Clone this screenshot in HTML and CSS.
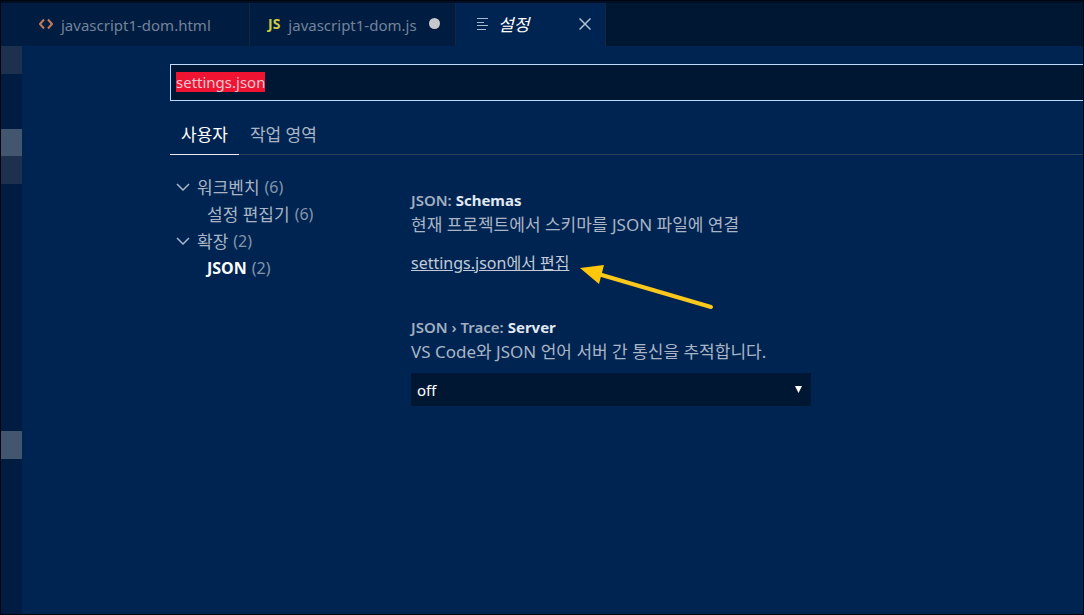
FILE: index.html
```html
<!DOCTYPE html>
<html lang="ko">
<head>
    <meta charset="UTF-8">
    <meta name="viewport" content="width=device-width, initial-scale=1.0">
    <title>설정</title>
    <link rel="stylesheet" href="styles.css">
</head>
<body>
    <div class="window">
        <div class="tab-bar">
            <div class="tab tab-html">
                <svg class="icon-code" viewBox="0 0 14 12" aria-hidden="true"><path d="M5 1.500 1 6l4 4.500M9 1.500 13 6l-4 4.500"/></svg>
                <span>javascript1-dom.html</span>
            </div>
            <div class="tab tab-js">
                <span class="icon-js">JS</span>
                <span>javascript1-dom.js</span>
                <span class="dirty"></span>
            </div>
            <div class="tab tab-settings active">
                <svg class="icon-list" viewBox="0 0 12 14" aria-hidden="true"><path d="M1 1.500h11M1 5.500h7M1 8.500h11M1 12.500h9"/></svg>
                <span class="tab-title">설정</span>
                <button class="close" aria-label="닫기">
                    <svg viewBox="0 0 12 12" aria-hidden="true"><path d="M.5.5l11 11M11.500.5l-11 11"/></svg>
                </button>
            </div>
        </div>

        <div class="main">
            <div class="sidebar">
                <div class="row dim"></div>
                <div class="row bright second"></div>
                <div class="row dim"></div>
                <div class="row bright last"></div>
            </div>

            <div class="settings">
                <input type="text" id="searchInput" class="search" value="settings.json" aria-label="설정 검색" spellcheck="false">

                <div class="scopes">
                    <button class="scope selected">사용자</button>
                    <button class="scope">작업 영역</button>
                </div>

                <div class="content">
                    <ul class="toc">
                        <li><svg class="chevron" viewBox="0 0 14 8" aria-hidden="true"><path d="M1 1l6 6 6-6"/></svg>워크벤치 <span class="count">(6)</span></li>
                        <li class="child">설정 편집기 <span class="count">(6)</span></li>
                        <li><svg class="chevron" viewBox="0 0 14 8" aria-hidden="true"><path d="M1 1l6 6 6-6"/></svg>확장 <span class="count">(2)</span></li>
                        <li class="child"><b>JSON</b> <span class="count">(2)</span></li>
                    </ul>

                    <div class="items">
                        <div class="item">
                            <h3>JSON: <b>Schemas</b></h3>
                            <p>현재 프로젝트에서 스키마를 JSON 파일에 연결</p>
                            <div class="edit">
                                <a href="#">settings.json에서 편집</a>
                                <svg class="arrow" viewBox="0 0 136 46" aria-hidden="true">
                                    <path class="shaft" d="M20 9.500 131 42"/>
                                    <path class="head" d="M0 3l24-3-5 19z"/>
                                </svg>
                            </div>
                        </div>
                        <div class="item">
                            <h3><label for="traceServer">JSON › Trace: <b>Server</b></label></h3>
                            <p>VS Code와 JSON 언어 서버 간 통신을 추적합니다.</p>
                            <div class="select-box">
                                <select id="traceServer">
                                    <option>off</option>
                                    <option>messages</option>
                                    <option>verbose</option>
                                </select>
                                <svg class="caret" viewBox="0 0 7 7" aria-hidden="true"><path d="M0 0h7L3.500 7z"/></svg>
                            </div>
                        </div>
                    </div>
                </div>
            </div>
        </div>
    </div>

    <script>
        // Start with the query selected so typing replaces it
        const searchInput = document.getElementById("searchInput");
        searchInput.focus();
        searchInput.select();
    </script>
</body>
</html>
```

FILE: styles.css
```css
* {
    box-sizing: border-box;
}
body {
    margin: 0;
    background-color: #002451;
    color: #a9b5c6;
    font-family: "Noto Sans", "Noto Sans CJK KR", sans-serif;
    font-size: 15px;
    line-height: 24px;
}
button {
    padding: 0;
    border: none;
    background: none;
    color: inherit;
    font: inherit;
    cursor: pointer;
}
svg {
    display: block;
    flex: none;
    fill: none;
}
.window {
    display: flex;
    flex-direction: column;
    min-height: 100vh;
    border: 1px solid #00050f;
}

/* Tabs */
.tab-bar {
    display: flex;
    height: 45px;
    border-top: 2px solid #000f24;
    background-color: #001733;
}
.tab {
    display: flex;
    align-items: center;
    border-right: 1px solid #15263c;
    background-color: #001c40;
    color: #73839b;
}
.tab-html {
    width: 249px;
    padding-left: 38px;
    gap: 8px;
}
.tab-js {
    width: 206px;
    padding-left: 18px;
    gap: 8px;
}
.tab-settings {
    width: 150px;
    padding: 0 14px 0 20px;
    gap: 10px;
}
.tab.active {
    background-color: #002451;
    color: #ffffff;
}
.tab-title {
    font-size: 17px;
    font-style: italic;
}
.icon-code {
    width: 14px;
    height: 12px;
    margin-bottom: 2px;
    stroke: #c27a5a;
    stroke-width: 2;
}
.icon-js {
    margin-bottom: 2px;
    color: #cbcb41;
    font-size: 14px;
    font-weight: bold;
}
.dirty {
    width: 11px;
    height: 11px;
    margin: 0 0 3px 4px;
    border-radius: 50%;
    background-color: #c6c8cc;
}
.icon-list {
    width: 12px;
    height: 14px;
    margin-bottom: 2px;
    stroke: #a9b8cc;
}
.close {
    margin-left: auto;
    padding-bottom: 2px;
}
.close svg {
    width: 12px;
    height: 12px;
    stroke: #b4c0d0;
    stroke-width: 1.5;
}

.main {
    display: flex;
    flex: 1;
}

/* Cropped file tree */
.sidebar {
    width: 21px;
    background-color: #001c40;
}
.row {
    height: 28px;
}
.dim {
    background-color: #1d304d;
}
.bright {
    background-color: #43566f;
}
.second {
    height: 27px;
    margin-top: 55px;
}
.last {
    margin-top: 247px;
}

/* Settings editor */
.settings {
    flex: 1;
    padding: 18px 0 0 148px;
}
.search {
    display: block;
    width: 100%;
    height: 37px;
    padding: 0 5px 2px;
    border: 1px solid #bbdaff;
    border-right: none;
    border-radius: 0;
    outline: none;
    background-color: #001733;
    color: #e0e4ea;
    font: inherit;
    caret-color: transparent;
}
.search::selection {
    background-color: #f01432;
    color: #e6c8d2;
}
.scopes {
    display: flex;
    height: 54px;
    padding-top: 15px;
    border-bottom: 1px solid #2d4158;
}
.scope {
    height: 39px;
    padding: 0 11px;
    border-bottom: 1px solid transparent;
    font-size: 17px;
}
.selected {
    border-bottom-color: #e7edf5;
    color: #ffffff;
}
.content {
    display: flex;
    padding-top: 19px;
}
.toc {
    width: 241px;
    margin: 0;
    padding: 0 0 0 6px;
    list-style: none;
    font-size: 17px;
    line-height: 27px;
}
.toc li {
    display: flex;
    align-items: center;
    gap: 5px;
}
.toc .child {
    padding-left: 31px;
}
.toc b {
    color: #ffffff;
    font-size: 16px;
}
.chevron {
    width: 14px;
    height: 8px;
    margin: 0 2px 2px 0;
    stroke: #aab6c8;
    stroke-width: 1.5;
}
.count {
    color: #8494aa;
    font-size: 16px;
}
.item {
    padding-top: 14px;
    margin-bottom: 26px;
}
.item h3 {
    margin: 0;
    color: #a0aec0;
    font-size: 15px;
    font-weight: 600;
}
.item h3 b {
    color: #e0e8f2;
    font-weight: bold;
}
.item p {
    margin: 0 0 9px;
    font-size: 17px;
    line-height: 25px;
}
.edit {
    position: relative;
    margin-top: 14px;
}
.edit a {
    color: #c0cbda;
    font-size: 16px;
}
.arrow {
    position: absolute;
    top: 14px;
    left: 169px;
    width: 136px;
    height: 46px;
}
.shaft {
    stroke: #fcc81c;
    stroke-width: 4;
    stroke-linecap: round;
}
.head {
    fill: #ffc60a;
}
.select-box {
    position: relative;
    width: 400px;
}
.select-box select {
    appearance: none;
    display: block;
    width: 100%;
    height: 33px;
    padding: 0 6px;
    border: none;
    border-radius: 0;
    background-color: #001733;
    color: #ffffff;
    font: inherit;
}
.caret {
    position: absolute;
    top: 13px;
    right: 9px;
    width: 7px;
    height: 7px;
    fill: #ffffff;
    pointer-events: none;
}
```
